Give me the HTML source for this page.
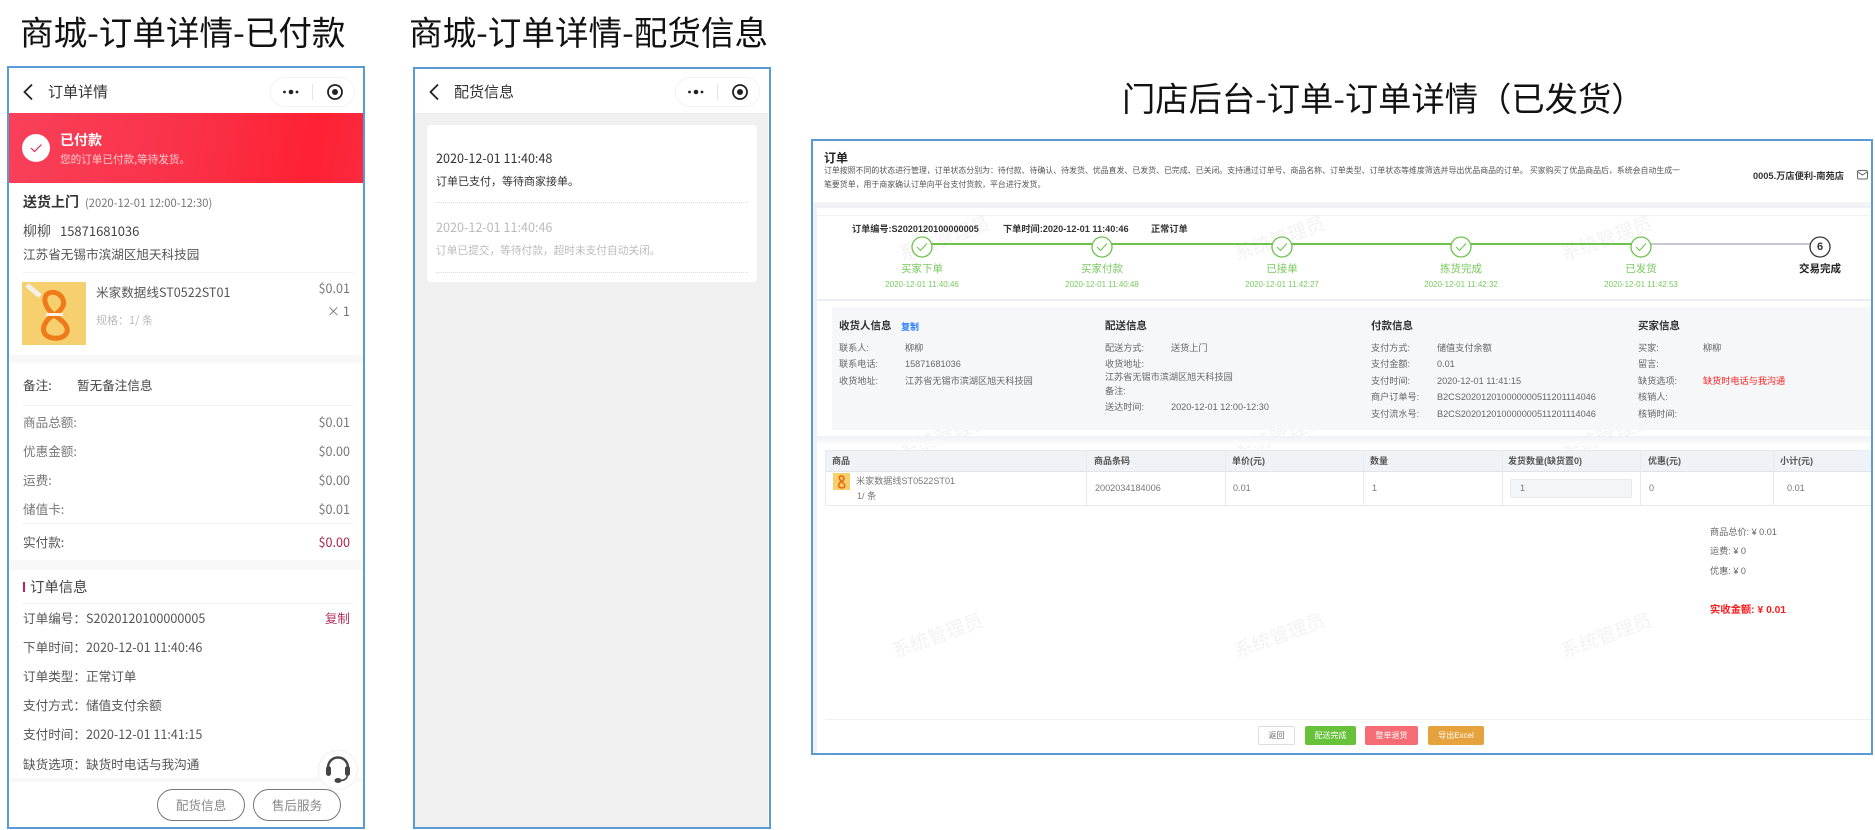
<!DOCTYPE html>
<html lang="zh">
<head>
<meta charset="utf-8">
<title>订单详情</title>
<style>
html,body{margin:0;padding:0;background:#fff}
body{position:relative;width:1875px;height:830px;overflow:hidden;font-family:"Noto Sans CJK SC","Liberation Sans",sans-serif}
.t{position:absolute;line-height:0;white-space:nowrap}
.b{position:absolute;box-sizing:border-box}
.title{font-size:33.6px;color:#111;top:31px}
.r{text-align:right}
#p1,#p2,#adm{filter:blur(.3px)}
.p{font-size:12.6px;color:#555}
.g{color:#777}
.line{position:absolute;height:1px;background:#f3f3f3}
.gap{position:absolute;background:#f8f8f8}
#adm .t{font-family:"Liberation Sans","Noto Sans CJK SC",sans-serif}
.a{font-size:9.15px;color:#666}
.ah{font-size:10.5px;color:#333;font-weight:700;top:326px}
.sl{font-size:10.5px;color:#78c95e;top:269px;transform:translateX(-50%)}
.st{font-size:8px;color:#78c95e;top:285px;transform:translateX(-50%)}
.th{font-size:9px;color:#555;font-weight:700;top:461px}
.td{font-size:9.1px;color:#777;top:488px}
.wm{font-size:19px;color:rgba(0,0,0,.05);transform:translate(-50%,0) rotate(-20deg)}
.btn{position:absolute;top:726px;height:19px;font-size:8px;line-height:19px;text-align:center;color:#fff;border-radius:2px;font-family:"Liberation Sans","Noto Sans CJK SC",sans-serif}
.pill{position:absolute;top:789px;height:32px;box-sizing:border-box;border:1px solid #777;border-radius:16px;font-size:12.6px;line-height:30px;text-align:center;color:#888;background:#fff}
.cap{position:absolute;top:77px;width:85px;height:30px;border:1px solid #f3f3f3;border-radius:15px;box-sizing:border-box}
</style>
</head>
<body>

<div class="t title" style="left:20px">商城-订单详情-已付款</div>
<div class="t title" style="left:409px">商城-订单详情-配货信息</div>
<div class="t title" style="left:1122px;top:97px;font-size:33.3px">门店后台-订单-订单详情（已发货）</div>

<!-- PHONE 1 -->
<div id="p1">
<div class="b" style="left:7px;top:66px;width:358px;height:763px;border:2px solid #5b9bd5"></div>
<svg class="b" style="left:22px;top:83px" width="12" height="18" viewBox="0 0 12 18"><path d="M10 1.5 2.5 9l7.5 7.5" fill="none" stroke="#222" stroke-width="1.8"/></svg>
<div class="t" style="left:48px;top:92px;font-size:15px;color:#333">订单详情</div>
<div class="cap" style="left:270px"></div>
<svg class="b" style="left:282px;top:86px" width="18" height="12"><circle cx="2.5" cy="6" r="1.4" fill="#222"/><circle cx="9" cy="6" r="2.3" fill="#222"/><circle cx="15" cy="6" r="1.4" fill="#222"/></svg>
<div class="b" style="left:312px;top:84px;width:1px;height:16px;background:#e5e5e5"></div>
<svg class="b" style="left:326px;top:83px" width="18" height="18"><circle cx="9" cy="9" r="7" fill="none" stroke="#222" stroke-width="1.8"/><circle cx="9" cy="9" r="3" fill="#222"/></svg>

<div class="b" style="left:9px;top:113px;width:354px;height:70px;background:linear-gradient(100deg,#f9405a 0%,#fa3148 50%,#ff2133 85%,#fa2a40 100%)"></div>
<div class="b" style="left:22px;top:134px;width:28px;height:28px;border-radius:50%;background:#fff"></div>
<svg class="b" style="left:30px;top:143px" width="13" height="10"><path d="M1 5 4.5 8.5 11.500 1.500" fill="none" stroke="#d42a5c" stroke-width="1.2"/></svg>
<div class="t" style="left:60px;top:140px;font-size:14px;font-weight:700;color:#fff">已付款</div>
<div class="t" style="left:60px;top:160px;font-size:10.6px;color:#fcc">您的订单已付款,等待发货。</div>

<div class="t" style="left:23px;top:202px;font-size:14px;font-weight:700;color:#333">送货上门</div>
<div class="t g" style="left:85px;top:203px;font-size:11.2px">(2020-12-01 12:00-12:30)</div>
<div class="t" style="left:23px;top:231px;font-size:14px;color:#555">柳柳</div>
<div class="t" style="left:60px;top:231px;font-size:13px;color:#444">15871681036</div>
<div class="t p" style="left:23px;top:254px">江苏省无锡市滨湖区旭天科技园</div>
<div class="line" style="left:23px;top:272px;width:330px"></div>

<svg class="b" style="left:22px;top:282px" width="64" height="63" viewBox="0 0 64 63">
<rect width="64" height="63" fill="#f6cf6f"/>
<path d="M5 3 18 14" stroke="#f4f1ea" stroke-width="5" fill="none"/>
<g fill="none" stroke="#ef7a1a" stroke-width="5">
<path d="M32 33C22 25 20 14 27 11 35 8 44 16 41 24 39 28 36 31 32 33"/>
<path d="M32 33C24 37 19 46 23 52 28 58 42 58 45 50 47 43 38 37 32 33"/>
</g>
<rect x="24" y="31" width="17" height="3" fill="#f8f1e2"/>
</svg>

<div class="t p" style="left:96px;top:292px">米家数据线ST0522ST01</div>
<div class="t r g" style="right:1525px;top:288px;font-size:12.6px">$0.01</div>
<div class="t r g" style="right:1525px;top:311px;font-size:13px">× 1</div>
<div class="t" style="left:96px;top:320px;font-size:11px;color:#bbb">规格：1/ 条</div>
<div class="gap" style="left:9px;top:355px;width:354px;height:8px"></div>

<div class="t p" style="left:23px;top:385px;color:#444">备注:</div>
<div class="t p" style="left:77px;top:385px;color:#444">暂无备注信息</div>
<div class="line" style="left:23px;top:405px;width:330px"></div>

<div class="t p g" style="left:23px;top:422px">商品总额:</div><div class="t r g" style="right:1525px;top:422px;font-size:12.6px">$0.01</div>
<div class="t p g" style="left:23px;top:451px">优惠金额:</div><div class="t r g" style="right:1525px;top:451px;font-size:12.6px">$0.00</div>
<div class="t p g" style="left:23px;top:480px">运费:</div><div class="t r g" style="right:1525px;top:480px;font-size:12.6px">$0.00</div>
<div class="t p g" style="left:23px;top:509px">储值卡:</div><div class="t r g" style="right:1525px;top:509px;font-size:12.6px">$0.01</div>
<div class="line" style="left:23px;top:523px;width:330px"></div>
<div class="t p" style="left:23px;top:542px">实付款:</div><div class="t r" style="right:1525px;top:542px;font-size:12.6px;color:#a5224a">$0.00</div>
<div class="gap" style="left:9px;top:560px;width:354px;height:10px"></div>

<div class="b" style="left:23px;top:582px;width:2px;height:10px;background:#c81e5a"></div>
<div class="t" style="left:30px;top:587px;font-size:14.4px;color:#444">订单信息</div>
<div class="line" style="left:23px;top:603px;width:330px"></div>

<div class="t p" style="left:23px;top:618px">订单编号：S2020120100000005</div>
<div class="t r" style="right:1525px;top:618px;font-size:12.6px;color:#b0305f">复制</div>
<div class="t p" style="left:23px;top:647px">下单时间：2020-12-01 11:40:46</div>
<div class="t p" style="left:23px;top:676px">订单类型：正常订单</div>
<div class="t p" style="left:23px;top:705px">支付方式：储值支付余额</div>
<div class="t p" style="left:23px;top:734px">支付时间：2020-12-01 11:41:15</div>
<div class="t p" style="left:23px;top:764px">缺货选项：缺货时电话与我沟通</div>
<div class="gap" style="left:9px;top:778px;width:354px;height:4px"></div>

<div class="pill" style="left:157px;width:88px">配货信息</div>
<div class="pill" style="left:253px;width:88px">售后服务</div>
<div class="b" style="left:318px;top:750px;width:40px;height:40px;border-radius:50%;background:#fff;border:1px solid #f0f0f0"></div>
<svg class="b" style="left:324px;top:755px" width="28" height="30" viewBox="0 0 28 30"><path d="M4 15V13C4 7 8 2.5 14 2.5S24 7 24 13V15" fill="none" stroke="#444" stroke-width="2.4"/><rect x="2" y="11" width="5" height="10" rx="2.5" fill="#444"/><rect x="21" y="11" width="5" height="10" rx="2.5" fill="#444"/><path d="M23.5 20C23 24 20 25.500 16 25.500" fill="none" stroke="#444" stroke-width="1.6"/><ellipse cx="14" cy="25.500" rx="3.500" ry="2.500" fill="#444"/></svg>
</div>

<!-- PHONE 2 -->
<div id="p2">
<div class="b" style="left:415px;top:113px;width:353px;height:714px;background:#f0f0f0"></div>
<div class="b" style="left:413px;top:67px;width:358px;height:762px;border:2px solid #5b9bd5"></div>
<svg class="b" style="left:428px;top:83px" width="12" height="18" viewBox="0 0 12 18"><path d="M10 1.5 2.5 9l7.5 7.500" fill="none" stroke="#222" stroke-width="1.8"/></svg>
<div class="t" style="left:454px;top:92px;font-size:15px;color:#333">配货信息</div>
<div class="cap" style="left:675px"></div>
<svg class="b" style="left:687px;top:86px" width="18" height="12"><circle cx="2.500" cy="6" r="1.400" fill="#222"/><circle cx="9" cy="6" r="2.300" fill="#222"/><circle cx="15" cy="6" r="1.400" fill="#222"/></svg>
<div class="b" style="left:717px;top:84px;width:1px;height:16px;background:#e5e5e5"></div>
<svg class="b" style="left:731px;top:83px" width="18" height="18"><circle cx="9" cy="9" r="7" fill="none" stroke="#222" stroke-width="1.800"/><circle cx="9" cy="9" r="3" fill="#222"/></svg>
<div class="b" style="left:427px;top:125px;width:330px;height:157px;background:#fff;border-radius:4px"></div>
<div class="t" style="left:436px;top:158px;font-size:12.6px;color:#333">2020-12-01 11:40:48</div>
<div class="t" style="left:436px;top:181px;font-size:11px;color:#333">订单已支付，等待商家接单。</div>
<div class="b" style="left:436px;top:202px;width:312px;height:0;border-top:1px dotted #ddd"></div>
<div class="t" style="left:436px;top:227px;font-size:12.6px;color:#bbb">2020-12-01 11:40:46</div>
<div class="t" style="left:436px;top:251px;font-size:10.700px;color:#bbb">订单已提交，等待付款，超时未支付自动关闭。</div>
<div class="b" style="left:436px;top:272px;width:312px;height:0;border-top:1px dotted #ddd"></div>
</div>

<!-- ADMIN -->
<div id="adm">
<div class="b" style="left:813px;top:202px;width:1058px;height:551px;background:#fff"></div>
<div class="b" style="left:813px;top:202px;width:1058px;height:6px;background:linear-gradient(#f5f5f7,#eff0f3)"></div>
<div class="b" style="left:813px;top:208px;width:4px;height:545px;background:#f0f2f5"></div>
<div class="b" style="left:811px;top:139px;width:1062px;height:616px;border:2px solid #5b9bd5"></div>

<div class="t" style="left:824px;top:158px;font-size:12px;font-weight:700;color:#222">订单</div>
<div class="t" style="left:824px;top:171px;font-size:7.91px;color:#555">订单按照不同的状态进行管理，订单状态分别为：待付款、待确认、待发货、优品直发、已发货、已完成、已关闭。支持通过订单号、商品名称、订单类型、订单状态等维度筛选并导出优品商品的订单。 买家购买了优品商品后，系统会自动生成一</div>
<div class="t" style="left:824px;top:185px;font-size:7.91px;color:#555">笔要货单，用于商家确认订单向平台支付货款，平台进行发货。</div>
<div class="t" style="left:1753px;top:176px;font-size:9.25px;font-weight:700;color:#333">0005.万店便利-南苑店</div>
<svg class="b" style="left:1857px;top:170px" width="11" height="10"><rect x=".5" y=".5" width="10" height="8.500" rx="1.500" fill="none" stroke="#666"/><path d="M1 2 5.500 5 10 2" fill="none" stroke="#666"/></svg>

<div class="b" style="left:817px;top:215px;width:1054px;height:1px;background:#f2f2f4"></div>
<div class="t" style="left:852px;top:229px;font-size:9.15px;font-weight:700;color:#333">订单编号:S2020120100000005</div>
<div class="t" style="left:1003px;top:229px;font-size:9.2px;font-weight:700;color:#333">下单时间:2020-12-01 11:40:46</div>
<div class="t" style="left:1151px;top:229px;font-size:9.2px;font-weight:700;color:#333">正常订单</div>

<div class="t wm" style="left:945px;top:240px">系统管理员</div>
<div class="t wm" style="left:1280px;top:240px">系统管理员</div>
<div class="t wm" style="left:1607px;top:240px">系统管理员</div>
<div class="t wm" style="left:945px;top:437px">系统管理员</div>
<div class="t wm" style="left:1280px;top:437px">系统管理员</div>
<div class="t wm" style="left:1607px;top:437px">系统管理员</div>
<div class="t wm" style="left:938px;top:637px">系统管理员</div>
<div class="t wm" style="left:1280px;top:637px">系统管理员</div>
<div class="t wm" style="left:1607px;top:637px">系统管理员</div>

<svg class="b" style="left:900px;top:232px" width="940" height="30" viewBox="900 232 940 30">
<path d="M922 244H1641" stroke="#6cc24a" stroke-width="2"/>
<path d="M1641 244H1820" stroke="#c8c8d0" stroke-width="2"/>
<g fill="#fff" stroke="#6cc24a" stroke-width="1.300">
<circle cx="922" cy="247" r="10"/><circle cx="1102" cy="247" r="10"/><circle cx="1282" cy="247" r="10"/><circle cx="1461" cy="247" r="10"/><circle cx="1641" cy="247" r="10"/>
</g>
<g fill="none" stroke="#6cc24a" stroke-width="1">
<path d="M917 247l3.500 3.500 6.500-7"/><path d="M1097 247l3.500 3.500 6.500-7"/><path d="M1277 247l3.500 3.500 6.500-7"/><path d="M1456 247l3.500 3.500 6.500-7"/><path d="M1636 247l3.500 3.500 6.500-7"/>
</g>
<circle cx="1820" cy="247" r="10" fill="#fff" stroke="#333" stroke-width="1.300"/>
</svg>
<div class="t" style="left:1820px;top:247px;font-size:11px;font-weight:700;color:#333;transform:translateX(-50%)">6</div>

<div class="t sl" style="left:922px">买家下单</div><div class="t st" style="left:922px">2020-12-01 11:40:46</div>
<div class="t sl" style="left:1102px">买家付款</div><div class="t st" style="left:1102px">2020-12-01 11:40:48</div>
<div class="t sl" style="left:1282px">已接单</div><div class="t st" style="left:1282px">2020-12-01 11:42:27</div>
<div class="t sl" style="left:1461px">拣货完成</div><div class="t st" style="left:1461px">2020-12-01 11:42:32</div>
<div class="t sl" style="left:1641px">已发货</div><div class="t st" style="left:1641px">2020-12-01 11:42:53</div>
<div class="t sl" style="left:1820px;color:#222;font-weight:700">交易完成</div>

<div class="b" style="left:817px;top:299px;width:1054px;height:2px;background:#ecedf2"></div>
<div class="b" style="left:832px;top:307px;width:1039px;height:123px;background:#f6f7f9"></div>
<div class="b" style="left:817px;top:436px;width:1054px;height:10px;background:linear-gradient(#f0f1f4,#fff)"></div>

<div class="t ah" style="left:839px">收货人信息</div>
<div class="t" style="left:901px;top:327px;font-size:9px;font-weight:700;color:#2a7fff">复制</div>
<div class="t a" style="left:839px;top:348px">联系人:</div><div class="t a" style="left:905px;top:348px">柳柳</div>
<div class="t a" style="left:839px;top:364px">联系电话:</div><div class="t a" style="left:905px;top:364px">15871681036</div>
<div class="t a" style="left:839px;top:381px">收货地址:</div><div class="t a" style="left:905px;top:381px">江苏省无锡市滨湖区旭天科技园</div>

<div class="t ah" style="left:1105px">配送信息</div>
<div class="t a" style="left:1105px;top:348px">配送方式:</div><div class="t a" style="left:1171px;top:348px">送货上门</div>
<div class="t a" style="left:1105px;top:364px">收货地址:</div>
<div class="t a" style="left:1105px;top:377px">江苏省无锡市滨湖区旭天科技园</div>
<div class="t a" style="left:1105px;top:391px">备注:</div>
<div class="t a" style="left:1105px;top:407px">送达时间:</div><div class="t a" style="left:1171px;top:407px">2020-12-01 12:00-12:30</div>

<div class="t ah" style="left:1371px">付款信息</div>
<div class="t a" style="left:1371px;top:348px">支付方式:</div><div class="t a" style="left:1437px;top:348px">储值支付余额</div>
<div class="t a" style="left:1371px;top:364px">支付金额:</div><div class="t a" style="left:1437px;top:364px">0.01</div>
<div class="t a" style="left:1371px;top:381px">支付时间:</div><div class="t a" style="left:1437px;top:381px">2020-12-01 11:41:15</div>
<div class="t a" style="left:1371px;top:397px">商户订单号:</div><div class="t a" style="left:1437px;top:397px">B2CS202012010000000511201114046</div>
<div class="t a" style="left:1371px;top:414px">支付流水号:</div><div class="t a" style="left:1437px;top:414px">B2CS202012010000000511201114046</div>

<div class="t ah" style="left:1638px">买家信息</div>
<div class="t a" style="left:1638px;top:348px">买家:</div><div class="t a" style="left:1703px;top:348px">柳柳</div>
<div class="t a" style="left:1638px;top:364px">留言:</div>
<div class="t a" style="left:1638px;top:381px">缺货选项:</div><div class="t a" style="left:1703px;top:381px;color:#ff2020">缺货时电话与我沟通</div>
<div class="t a" style="left:1638px;top:397px">核销人:</div>
<div class="t a" style="left:1638px;top:414px">核销时间:</div>

<!-- table -->
<div class="b" style="left:825px;top:450px;width:1046px;height:56px;border:1px solid #e8eaee;border-right:0"></div>
<div class="b" style="left:826px;top:451px;width:1045px;height:21px;background:#eff2f7;border-bottom:1px solid #e0e3e8"></div>
<div class="b" style="left:1086px;top:451px;width:1px;height:54px;background:#e8eaee"></div>
<div class="b" style="left:1225px;top:451px;width:1px;height:54px;background:#e8eaee"></div>
<div class="b" style="left:1363px;top:451px;width:1px;height:54px;background:#e8eaee"></div>
<div class="b" style="left:1502px;top:451px;width:1px;height:54px;background:#e8eaee"></div>
<div class="b" style="left:1640px;top:451px;width:1px;height:54px;background:#e8eaee"></div>
<div class="b" style="left:1773px;top:451px;width:1px;height:54px;background:#e8eaee"></div>
<div class="t th" style="left:832px">商品</div>
<div class="t th" style="left:1094px">商品条码</div>
<div class="t th" style="left:1232px">单价(元)</div>
<div class="t th" style="left:1370px">数量</div>
<div class="t th" style="left:1508px">发货数量(缺货置0)</div>
<div class="t th" style="left:1648px">优惠(元)</div>
<div class="t th" style="left:1780px">小计(元)</div>

<svg class="b" style="left:833px;top:473px" width="17" height="17" viewBox="0 0 17 17"><rect width="17" height="17" fill="#f6cf6f"/><path d="M8.500 8.500C6 6.500 5.500 3.500 7.500 3 9.500 2.200 11.500 4.500 10.800 6.500 10.300 7.500 9.500 8 8.500 8.500 6.500 9.500 5 12 6 13.800 7.500 15.300 11 15.300 11.800 13.300 12.300 11.500 10 10 8.500 8.500Z" fill="none" stroke="#ef6a12" stroke-width="1.600"/></svg>
<div class="t td" style="left:856px;top:481px">米家数据线ST0522ST01</div>
<div class="t td" style="left:857px;top:496px">1/ 条</div>
<div class="t td" style="left:1095px">2002034184006</div>
<div class="t td" style="left:1233px">0.01</div>
<div class="t td" style="left:1372px">1</div>
<div class="b" style="left:1510px;top:479px;width:122px;height:19px;background:#f3f5f8;border:1px solid #e8eaee;border-radius:2px"></div>
<div class="t td" style="left:1520px">1</div>
<div class="t td" style="left:1649px">0</div>
<div class="t td" style="left:1787px">0.01</div>

<div class="t a" style="left:1710px;top:532px">商品总价: ¥ 0.01</div>
<div class="t a" style="left:1710px;top:551px">运费: ¥ 0</div>
<div class="t a" style="left:1710px;top:571px">优惠: ¥ 0</div>
<div class="t" style="left:1710px;top:611px;font-size:10.3px;font-weight:700;color:#ff1a1a">实收金额: ¥ 0.01</div>

<div class="b" style="left:825px;top:719px;width:1046px;height:1px;background:#f0f0f2"></div>
<div class="btn" style="left:1258px;width:37px;box-sizing:border-box;background:#fff;border:1px solid #ddd;color:#666;line-height:17px">返回</div>
<div class="btn" style="left:1305px;width:51px;background:#67c23a">配送完成</div>
<div class="btn" style="left:1365px;width:53px;background:#f56c74">整单退货</div>
<div class="btn" style="left:1428px;width:56px;background:#e6a23c">导出Excel</div>
</div>

</body>
</html>
